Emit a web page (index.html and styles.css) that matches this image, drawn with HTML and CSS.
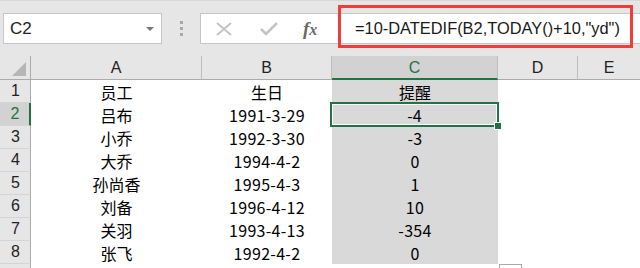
FILE: index.html
```html
<!DOCTYPE html>
<html lang="zh">
<head>
<meta charset="utf-8">
<link rel="stylesheet" href="styles.css">
</head>
<body>
<div class="app">
  <div class="toolbar">
    <div class="namebox">
      <span class="name">C2</span>
      <span class="caret"></span>
    </div>
    <div class="dots"><i></i><i></i><i></i></div>
    <div class="fbar">
      <div class="ficons">
        <svg class="ic" width="18" height="14" viewBox="0 0 18 14"><path d="M2 1 L16 13 M16 1 L2 13" stroke="#c4c4c4" stroke-width="2" fill="none"/></svg>
        <svg class="ic" width="18" height="14" viewBox="0 0 18 14"><path d="M1 7 L6 12 L17 1" stroke="#c4c4c4" stroke-width="2.6" fill="none"/></svg>
        <span class="fx">f<span class="x">x</span></span>
      </div>
      <div class="ftext">=10-DATEDIF(B2,TODAY()+10,"yd")</div>
      <div class="redbox"></div>
    </div>
  </div>
  <div class="sheet">
    <div class="corner"><span class="tri"></span></div>
    <div class="ch">A</div>
    <div class="ch">B</div>
    <div class="ch sel">C</div>
    <div class="ch">D</div>
    <div class="ch last">E</div>

    <div class="rh">1</div><div class="c">员工</div><div class="c">生日</div><div class="c cs">提醒</div><div class="c"></div><div class="c"></div>
    <div class="rh sel">2</div><div class="c">吕布</div><div class="c num">1991-3-29</div><div class="c cs active">-4<span class="handle"></span></div><div class="c"></div><div class="c"></div>
    <div class="rh">3</div><div class="c">小乔</div><div class="c num">1992-3-30</div><div class="c cs num">-3</div><div class="c"></div><div class="c"></div>
    <div class="rh">4</div><div class="c">大乔</div><div class="c num">1994-4-2</div><div class="c cs num">0</div><div class="c"></div><div class="c"></div>
    <div class="rh">5</div><div class="c">孙尚香</div><div class="c num">1995-4-3</div><div class="c cs num">1</div><div class="c"></div><div class="c"></div>
    <div class="rh">6</div><div class="c">刘备</div><div class="c num">1996-4-12</div><div class="c cs num">10</div><div class="c"></div><div class="c"></div>
    <div class="rh">7</div><div class="c">关羽</div><div class="c num">1993-4-13</div><div class="c cs num">-354</div><div class="c"></div><div class="c"></div>
    <div class="rh">8</div><div class="c">张飞</div><div class="c num">1992-4-2</div><div class="c cs num">0</div><div class="c"></div><div class="c"></div>
    <div class="rh"></div><div class="c"></div><div class="c"></div><div class="c"><span class="opt"></span></div><div class="c"></div><div class="c"></div>
  </div>
</div>
</body>
</html>
```
FILE: styles.css
```css
html, body {
  margin: 0;
  padding: 0;
  background: #ffffff;
}
.app {
  width: 640px;
  height: 268px;
  overflow: hidden;
  font-family: "Noto Sans CJK SC", "Liberation Sans", sans-serif;
  color: #000;
}
.toolbar {
  height: 56px;
  background: #e6e6e6;
  display: flex;
  align-items: flex-start;
  padding-top: 13px;
  box-sizing: border-box;
  border-top: 1px solid #d8d8d8;
}
.namebox {
  margin-left: 3px;
  width: 159px;
  height: 31px;
  box-sizing: border-box;
  border: 1px solid #c6c6c6;
  background: #fff;
  display: flex;
  align-items: center;
  justify-content: space-between;
  padding: 0 7px 0 6px;
  margin-top: -1px;
}
.name {
  font-family: "Liberation Sans", sans-serif;
  font-size: 17px;
  color: #222;
}
.caret {
  width: 0;
  height: 0;
  border-left: 4px solid transparent;
  border-right: 4px solid transparent;
  border-top: 4px solid #777;
}
.dots {
  width: 38px;
  height: 31px;
  display: flex;
  flex-direction: column;
  align-items: center;
  justify-content: center;
  gap: 3px;
  margin-top: -1px;
}
.dots i {
  display: block;
  width: 3px;
  height: 3px;
  background: #a8a8a8;
}
.fbar {
  position: relative;
  flex: 1;
  height: 31px;
  margin-top: -1px;
  display: flex;
  align-items: center;
  background: #fff;
  border: 1px solid #c6c6c6;
  border-right: none;
  box-sizing: border-box;
}
.ficons {
  width: 137px;
  display: flex;
  align-items: center;
  padding-left: 14px;
  gap: 27px;
  box-sizing: border-box;
  height: 100%;
}
.ic { display: block; }
.fx {
  font-family: "Liberation Serif", serif;
  font-style: italic;
  font-weight: bold;
  font-size: 19px;
  color: #6a6a6a;
  margin-left: -2px;
}
.fx .x { font-size: 16px; }
.ftext {
  padding-left: 17px;
  font-family: "Liberation Sans", sans-serif;
  font-size: 16.4px;
  letter-spacing: 0;
  color: #1a1a1a;
  white-space: nowrap;
}
.redbox {
  position: absolute;
  left: 137px;
  top: -9px;
  width: 295px;
  height: 43px;
  border: 3px solid #f23c3c;
  box-sizing: border-box;
}
.sheet {
  display: grid;
  grid-template-columns: 31px 171px 130px 166px 80px 1fr;
  grid-template-rows: 24px repeat(9, 23px);
}
.corner {
  position: relative;
  background: #e6e6e6;
  border-right: 1px solid #ababab;
  border-bottom: 1px solid #ababab;
  box-sizing: border-box;
}
.tri {
  position: absolute;
  right: 4px;
  bottom: 3px;
  width: 0;
  height: 0;
  border-left: 14px solid transparent;
  border-bottom: 14px solid #b6b6b6;
}
.ch {
  background: #e6e6e6;
  border-right: 1px solid #bdbdbd;
  border-bottom: 1px solid #ababab;
  box-sizing: border-box;
  display: flex;
  align-items: center;
  justify-content: center;
  font-family: "Liberation Sans", sans-serif;
  font-size: 16px;
  color: #222;
}
.ch.last { border-right: none; }
.ch.sel {
  background: #d2d2d2;
  color: #217346;
  border-bottom: 2px solid #217346;
  padding-top: 1px;
}
.rh {
  background: #e6e6e6;
  border-right: 1px solid #ababab;
  border-bottom: 1px solid #d4d4d4;
  box-sizing: border-box;
  display: flex;
  align-items: center;
  justify-content: center;
  font-family: "Liberation Sans", sans-serif;
  font-size: 16px;
  color: #222;
  padding-left: 1px;
}
.rh.sel {
  background: #d2d2d2;
  color: #217346;
  border-right: 2px solid #217346;
}
.c {
  display: flex;
  align-items: center;
  justify-content: center;
  font-size: 16px;
  white-space: nowrap;
  position: relative;
}
.num { letter-spacing: 0.3px; }
.cs { background: #d9d9d9; }
.active {
  border: 2px solid #217346;
  box-shadow: inset 0 0 0 1px #fff;
  margin: -1px -1px -1px -2px;
  z-index: 2;
}
.handle {
  position: absolute;
  right: -5px;
  bottom: -5px;
  width: 6px;
  height: 6px;
  background: #217346;
  border: 1px solid #fff;
}
.opt {
  position: absolute;
  left: 167px;
  top: 0;
  width: 23px;
  height: 10px;
  border: 1px solid #aaa;
  border-bottom: none;
  box-sizing: border-box;
}
```
